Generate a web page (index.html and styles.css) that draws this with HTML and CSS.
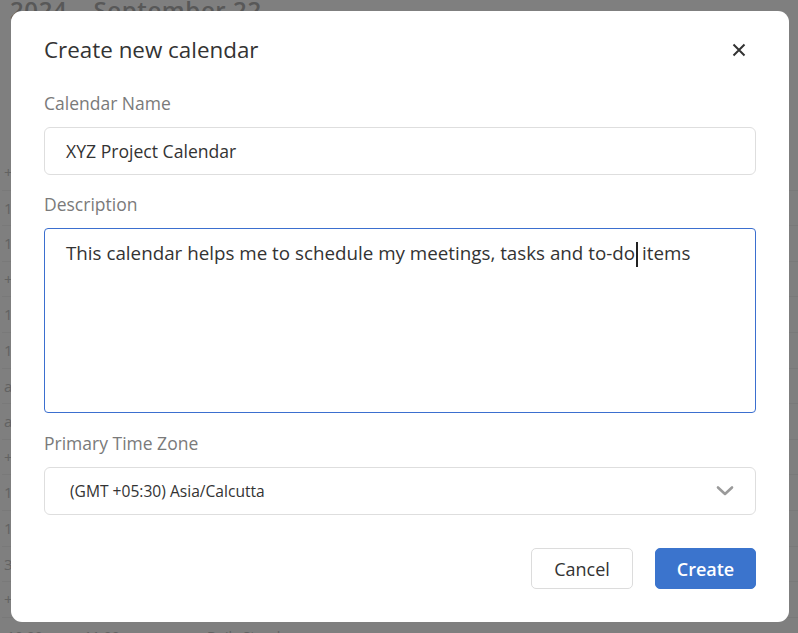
FILE: index.html
```html
<!DOCTYPE html>
<html lang="en">
<head>
<meta charset="utf-8">
<title>Create new calendar</title>
<link rel="stylesheet" href="styles.css">
</head>
<body>
<div class="page">
  <h1 class="page-title">2024 – September 22</h1>
  <div class="rows">
    <div class="row">+ Add event</div>
    <div class="row">10:00 Team sync</div>
    <div class="row">11:00 Review</div>
    <div class="row">+ Add event</div>
    <div class="row">12:00 Lunch</div>
    <div class="row">14:00 Planning</div>
    <div class="row">all day Holiday</div>
    <div class="row">all day Release</div>
    <div class="row">+ Add event</div>
    <div class="row">15:00 Design</div>
    <div class="row">16:00 Retro</div>
    <div class="row">3:00 Report</div>
    <div class="row">+ Add event</div>
    <div class="row last"><span class="t1">10:00</span><span class="t2">11:00</span><span class="t3">Daily Standup</span></div>
  </div>
</div>

<div class="overlay">
  <div class="modal">
    <div class="modal-header">
      <h2 class="modal-title">Create new calendar</h2>
      <button class="close" aria-label="Close">
        <svg width="14" height="14" viewBox="0 0 14 14"><path d="M1.5 1.5 L12.5 12.5 M12.5 1.5 L1.5 12.5" stroke="#333" stroke-width="2" fill="none"/></svg>
      </button>
    </div>

    <label class="label">Calendar Name</label>
    <div class="input">XYZ Project Calendar</div>

    <label class="label gap">Description</label>
    <div class="textarea">This calendar helps me to schedule my meetings, tasks and to-do<span class="caret"></span>items</div>

    <label class="label gap2">Primary Time Zone</label>
    <div class="select">
      <span>(GMT +05:30) Asia/Calcutta</span>
      <svg width="18" height="12" viewBox="0 0 18 12"><path d="M2 2.5 L9 9 L16 2.5" stroke="#9a9a9a" stroke-width="2.6" fill="none" stroke-linecap="round" stroke-linejoin="round"/></svg>
    </div>

    <div class="actions">
      <button class="btn cancel">Cancel</button>
      <button class="btn create">Create</button>
    </div>
  </div>
</div>
</body>
</html>
```

FILE: styles.css
```css
* { box-sizing: border-box; }

html, body {
  margin: 0;
  padding: 0;
  width: 798px;
  height: 633px;
  overflow: hidden;
  font-family: "Open Sans", "Liberation Sans", sans-serif;
  background: #ffffff;
}

.page {
  padding-left: 10px;
}

.page-title {
  margin: -3px 0 0 0;
  font-size: 24px;
  font-weight: 600;
  color: #b0b0b0;
  letter-spacing: 0.6px;
  line-height: 26px;
  height: 26px;
  white-space: nowrap;
}

.rows {
  margin-top: 132px;
  margin-left: -8px;
}

.row {
  height: 35.6px;
  line-height: 35px;
  font-size: 15px;
  color: #c4c4c4;
  border-bottom: 1px solid #f2f2f2;
  white-space: nowrap;
  padding-left: 2px;
}

.row.last {
  border-bottom: none;
  padding-left: 5px;
  display: flex;
  font-size: 14px;
  line-height: 38px;
}
.t1 { width: 77px; }
.t2 { width: 123px; }

.overlay {
  position: fixed;
  inset: 0;
  background: rgba(0, 0, 0, 0.5);
  padding: 11px 0 0 11px;
}

.modal {
  width: 778px;
  height: 611px;
  background: #fff;
  border-radius: 11px;
  padding: 25px 33px 33px 33px;
  display: flex;
  flex-direction: column;
}

.modal-header {
  display: flex;
  align-items: center;
  justify-content: space-between;
  height: 28px;
  margin-bottom: 28px;
}

.modal-title {
  margin: 0;
  font-size: 22.4px;
  font-weight: 500;
  color: #333;
  line-height: 28px;
}

.close {
  border: none;
  background: none;
  padding: 0;
  width: 14px;
  height: 14px;
  margin-right: 10px;
  display: flex;
}

.label {
  display: block;
  font-size: 17.5px;
  line-height: 22px;
  color: #7a7a7a;
  margin-bottom: 13px;
}
.label.gap { margin-top: 18px; }
.label.gap2 { margin-top: 19px; }

.input, .select {
  height: 48px;
  border: 1px solid #dedede;
  border-radius: 6px;
  display: flex;
  align-items: center;
}

.input {
  padding-left: 21px;
  font-size: 17.6px;
  color: #333;
}

.textarea {
  height: 185px;
  border: 1px solid #3b6fcf;
  border-radius: 4px;
  padding: 11px 21px;
  font-size: 18.8px;
  line-height: 26px;
  color: #333;
}

.caret {
  display: inline-block;
  width: 2px;
  height: 25px;
  background: #222;
  vertical-align: -7px;
  margin: 0 4px 0 1px;
}

.select {
  justify-content: space-between;
  padding: 0 21px 0 25px;
  font-size: 15.6px;
  color: #333;
}

.actions {
  margin-top: 33px;
  display: flex;
  justify-content: flex-end;
  gap: 22px;
}

.btn {
  height: 41px;
  border-radius: 5px;
  font-family: "Open Sans", "Liberation Sans", sans-serif;
  font-size: 18px;
  padding: 0;
}

.cancel {
  width: 102px;
  background: #fff;
  border: 1px solid #dcdcdc;
  color: #333;
}

.create {
  width: 101px;
  background: #3b74cd;
  border: 1px solid #3b74cd;
  color: #fff;
  font-weight: 600;
}
```
